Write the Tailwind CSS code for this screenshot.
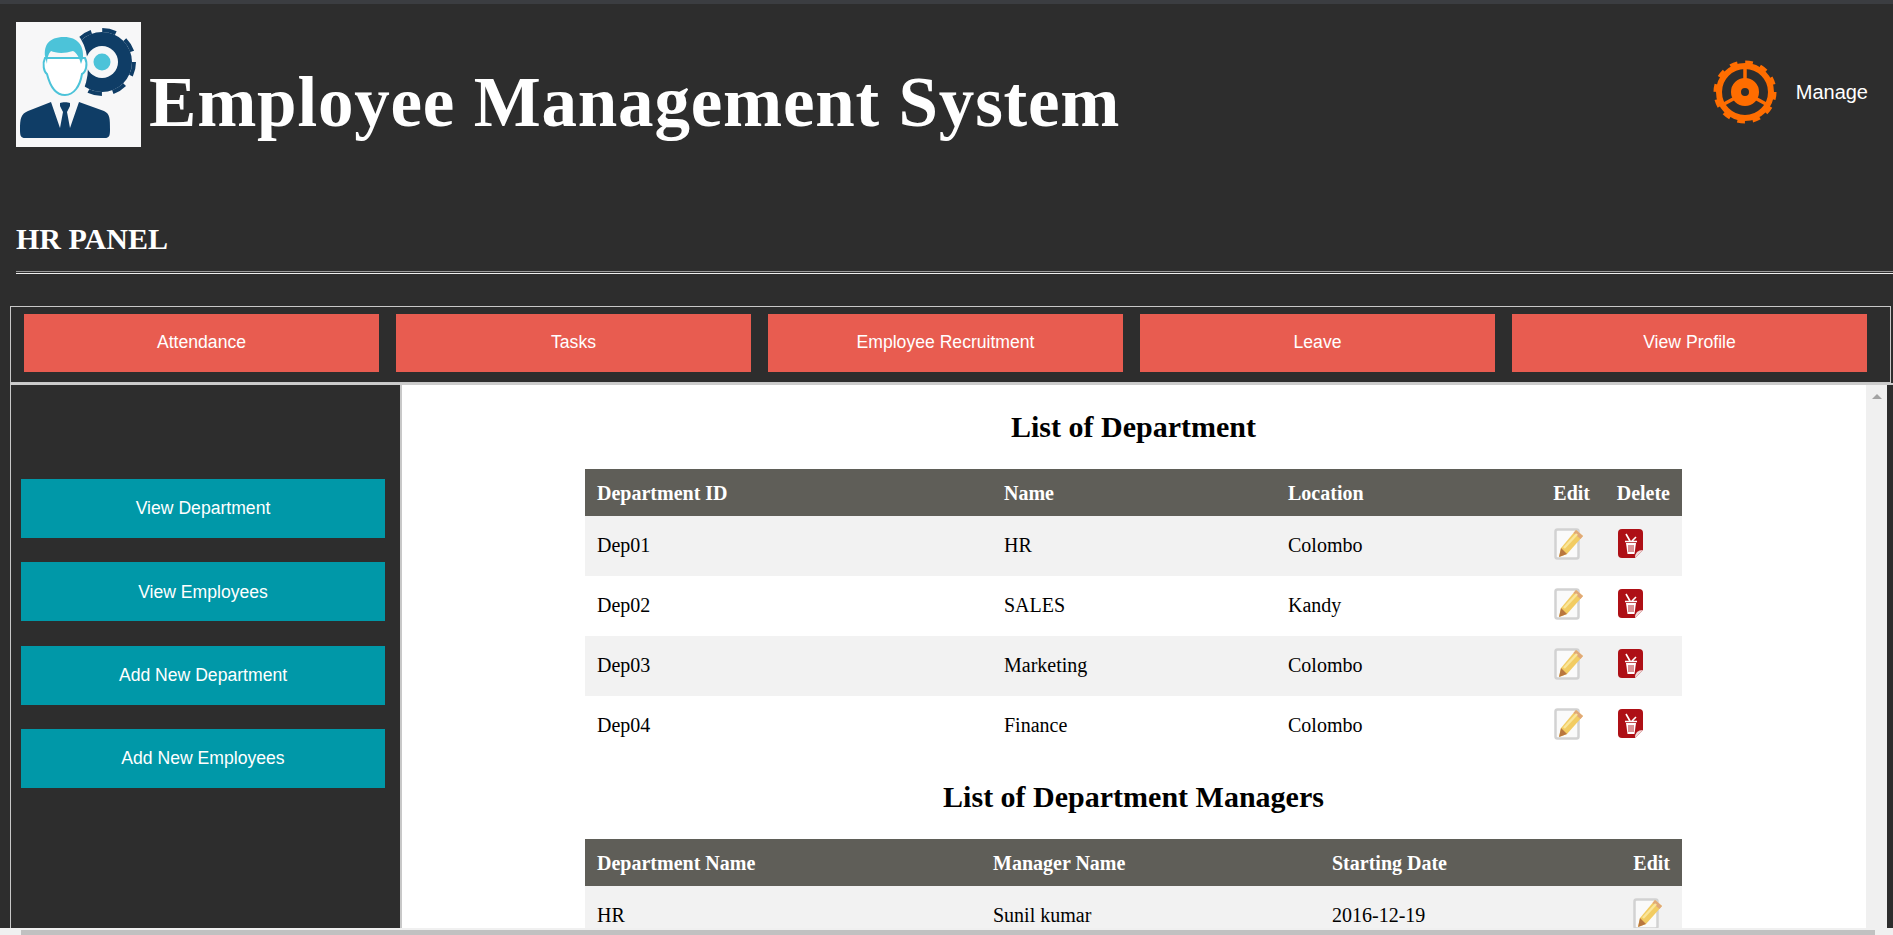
<!doctype html>
<html lang="en"><head><meta charset="utf-8"><title>Employee Management System</title>
<script src="https://cdn.jsdelivr.net/npm/@tailwindcss/browser@4"></script></head>
<body class="m-0 w-[1893px] h-[935px] overflow-hidden bg-[#2d2d2d] font-['Liberation_Serif',serif] text-white">
<svg class="hidden"><defs>
<symbol id="pencil" viewBox="0 0 30 32">
<rect x="1.500" y="1.500" width="23" height="29" rx="2" fill="#fafafa" stroke="#d2d2d2" stroke-width="2.500"/>
<path d="M22 2 L29 8 L13 26 L5 29 L7 20 Z" fill="#f2cc62"/>
<path d="M22 2 L29 8 L26.500 11 L19.500 5 Z" fill="#e0a878"/>
<path d="M7 20 L13 26 L5 29 Z" fill="#b9773f"/>
<path d="M10 20 L23 6" stroke="#f9e59a" stroke-width="2.500"/>
</symbol>
<symbol id="trash" viewBox="0 0 25 30">
<path d="M4 0 H21 Q25 0 25 4 V21 L17 29 H4 Q0 29 0 25 V4 Q0 0 4 0 Z" fill="#ae1016"/>
<path d="M25 21 L17 29 Q17 21 25 21 Z" fill="#f0d8d8"/>
<path d="M8 14 H18 L16.500 25 H9.500 Z" fill="#fff"/>
<path d="M7 12.500 H19 M12 12 L8 5 M14 12 L18 8" stroke="#fff" stroke-width="1.600" fill="none"/>
<path d="M11 16 V23 M13 16 V23 M15 16 V23" stroke="#ae1016" stroke-width="0.900"/>
</symbol>
</defs></svg>
<div class="h-1 bg-[#3b3d41]"></div>
<header class="h-[190px] flex items-start justify-between">
  <div class="flex items-start pl-4 pt-[18px]">
    <svg class="w-[125px] h-[125px] shrink-0" viewBox="0 0 125 125" role="img" aria-label="Logo">
      <rect width="125" height="125" fill="#f7f7f8"/>
      <circle cx="86" cy="40" r="30" fill="#0f3d66"/>
      <circle cx="86" cy="40" r="32" fill="none" stroke="#0f3d66" stroke-width="4" stroke-dasharray="14 11.130"/>
      <circle cx="86" cy="40" r="16" fill="#f7f7f8"/>
      <circle cx="86" cy="40" r="8.500" fill="#4cc3d9"/>
      <ellipse cx="47" cy="45" rx="25" ry="40" fill="#f7f7f8"/>
      <path d="M29 36 C26 42 28 50 31 52 C34 64 40 73 49 73 C58 73 64 64 66 52 C70 50 72 42 69 36 Z" fill="#fff" stroke="#4cc3d9" stroke-width="2"/>
      <path d="M29 34 C28 24 32 15 48 15 C62 15 68 24 67 36 L65 42 C63 35 61 31 57 29 C48 32 39 31 35 29 C32 32 31 37 31 42 Z" fill="#4cc3d9"/>
      <path d="M4 108 C4 96 5 92 12 89 L35 80 L44 106 L47 90 L44 84 L44 81 C46 80 52 80 54 81 L54 84 L51 90 L54 106 L63 80 L88 89 C94 92 94 96 94 108 C94 114 93 116 89 116 H9 C5 116 4 114 4 108 Z" fill="#0f3d66"/>
    </svg>
    <h1 class="ml-2 mt-[40px] text-[71px] leading-[80px] font-bold tracking-[0.8px] whitespace-nowrap">Employee Management System</h1>
  </div>
  <div class="flex items-center pt-14 pr-[25px]">
    <svg class="w-[64px] h-[64px]" viewBox="0 0 64 64" role="img" aria-label="Manage">
      <circle cx="32" cy="32" r="26" fill="none" stroke="#ff6d00" stroke-width="6"/>
      <circle cx="32" cy="32" r="28.500" fill="none" stroke="#ff6d00" stroke-width="6" stroke-dasharray="7.400 7.520"/>
      <circle cx="32" cy="32" r="9" fill="none" stroke="#ff6d00" stroke-width="10"/>
      <path d="M32 8 V20 M11 44 L22 38 M53 44 L42 38" stroke="#ff6d00" stroke-width="3.500"/>
    </svg>
    <span class="ml-[19px] font-['Liberation_Sans',sans-serif] text-[20px]">Manage</span>
  </div>
</header>
<h2 class="pl-4 h-[77px] pt-[28px] text-[30px] leading-[34px] font-bold">HR PANEL</h2>
<div class="ml-4 h-[3px] border-t border-t-[#999] border-b border-b-[#eee]"></div>
<nav class="ml-[10px] mr-[2px] mt-[32px] h-[77px] border border-[#c8c8c8] pl-[13px] pt-[7px] flex gap-[17px] font-['Liberation_Sans',sans-serif] text-[17.6px]">
  <a class="w-[355px] h-[58px] bg-[#e85c50] flex items-center justify-center pb-[2px]">Attendance</a>
  <a class="w-[355px] h-[58px] bg-[#e85c50] flex items-center justify-center pb-[2px]">Tasks</a>
  <a class="w-[355px] h-[58px] bg-[#e85c50] flex items-center justify-center pb-[2px]">Employee Recruitment</a>
  <a class="w-[355px] h-[58px] bg-[#e85c50] flex items-center justify-center pb-[2px]">Leave</a>
  <a class="w-[355px] h-[58px] bg-[#e85c50] flex items-center justify-center pb-[2px]">View Profile</a>
</nav>
<div class="ml-[10px] h-[545px] flex border-t-2 border-t-[#ccc]">
  <aside class="w-[392px] shrink-0 border-l border-l-[#c8c8c8] border-r-2 border-r-[#c8c8c8] pl-[10px] pt-[94px] flex flex-col gap-[24.330px] font-['Liberation_Sans',sans-serif] text-[17.6px]">
    <a class="w-[364px] h-[59px] bg-[#0098a8] flex items-center justify-center">View Department</a>
    <a class="w-[364px] h-[59px] bg-[#0098a8] flex items-center justify-center">View Employees</a>
    <a class="w-[364px] h-[59px] bg-[#0098a8] flex items-center justify-center">Add New Department</a>
    <a class="w-[364px] h-[59px] bg-[#0098a8] flex items-center justify-center">Add New Employees</a>
  </aside>
  <main class="w-[1464px] bg-white text-black overflow-hidden pl-[183px] text-[20px]">
    <h2 class="w-[1097px] text-center text-[30px] leading-[34px] font-bold pt-[25px] h-[84px]">List of Department</h2>
    <table class="w-[1097px] table-fixed border-collapse">
      <colgroup><col class="w-[407px]"><col class="w-[284px]"><col class="w-[265px]"><col class="w-[62px]"><col class="w-[79px]"></colgroup>
      <thead><tr class="h-[47px] bg-[#5f5e58] text-white font-bold text-left"><th class="pl-[12px]">Department ID</th><th class="pl-[12px]">Name</th><th class="pl-[12px]">Location</th><th class="text-right pr-[13px]">Edit</th><th class="text-right pr-3">Delete</th></tr></thead>
      <tbody>
        <tr class="h-[60px] bg-[#f2f2f2]"><td class="pl-[12px] pb-[2px]">Dep01</td><td class="pl-[12px] pb-[2px]">HR</td><td class="pl-[12px] pb-[2px]">Colombo</td><td class="pl-[13px] pb-[5px]"><svg class="w-[30px] h-[32px]"><use href="#pencil"/></svg></td><td class="pl-[15px] pb-[5px]"><svg class="w-[25px] h-[30px]"><use href="#trash"/></svg></td></tr>
        <tr class="h-[60px]"><td class="pl-[12px] pb-[2px]">Dep02</td><td class="pl-[12px] pb-[2px]">SALES</td><td class="pl-[12px] pb-[2px]">Kandy</td><td class="pl-[13px] pb-[5px]"><svg class="w-[30px] h-[32px]"><use href="#pencil"/></svg></td><td class="pl-[15px] pb-[5px]"><svg class="w-[25px] h-[30px]"><use href="#trash"/></svg></td></tr>
        <tr class="h-[60px] bg-[#f2f2f2]"><td class="pl-[12px] pb-[2px]">Dep03</td><td class="pl-[12px] pb-[2px]">Marketing</td><td class="pl-[12px] pb-[2px]">Colombo</td><td class="pl-[13px] pb-[5px]"><svg class="w-[30px] h-[32px]"><use href="#pencil"/></svg></td><td class="pl-[15px] pb-[5px]"><svg class="w-[25px] h-[30px]"><use href="#trash"/></svg></td></tr>
        <tr class="h-[60px]"><td class="pl-[12px] pb-[2px]">Dep04</td><td class="pl-[12px] pb-[2px]">Finance</td><td class="pl-[12px] pb-[2px]">Colombo</td><td class="pl-[13px] pb-[5px]"><svg class="w-[30px] h-[32px]"><use href="#pencil"/></svg></td><td class="pl-[15px] pb-[5px]"><svg class="w-[25px] h-[30px]"><use href="#trash"/></svg></td></tr>
      </tbody>
    </table>
    <h2 class="w-[1097px] text-center text-[30px] leading-[34px] font-bold pt-[24px] h-[83px]">List of Department Managers</h2>
    <table class="w-[1097px] table-fixed border-collapse">
      <colgroup><col class="w-[408px]"><col class="w-[339px]"><col class="w-[270px]"><col class="w-[80px]"></colgroup>
      <thead><tr class="h-[47px] bg-[#5f5e58] text-white font-bold text-left"><th class="pl-[12px]">Department Name</th><th class="pl-0">Manager Name</th><th class="pl-0">Starting Date</th><th class="text-right pr-3">Edit</th></tr></thead>
      <tbody><tr class="h-[60px] bg-[#f2f2f2]"><td class="pl-[12px] pb-[2px]">HR</td><td class="pb-[2px]">Sunil kumar</td><td class="pb-[2px]">2016-12-19</td><td class="text-right pr-[19px] pb-[5px]"><svg class="inline-block w-[30px] h-[32px]"><use href="#pencil"/></svg></td></tr></tbody>
    </table>
  </main>
  <div class="w-[21px] bg-[#f0f0f0] flex justify-center pt-[9px]"><div class="w-0 h-0 border-x-[5px] border-x-transparent border-b-[5px] border-b-[#a3a3a3]"></div></div>
</div>
<div class="h-[7px] bg-[#f0f0f0] pl-[21px] pr-[18px] pt-[2px]"><div class="h-[5px] bg-[#c1c1c1]"></div></div>
</body></html>
